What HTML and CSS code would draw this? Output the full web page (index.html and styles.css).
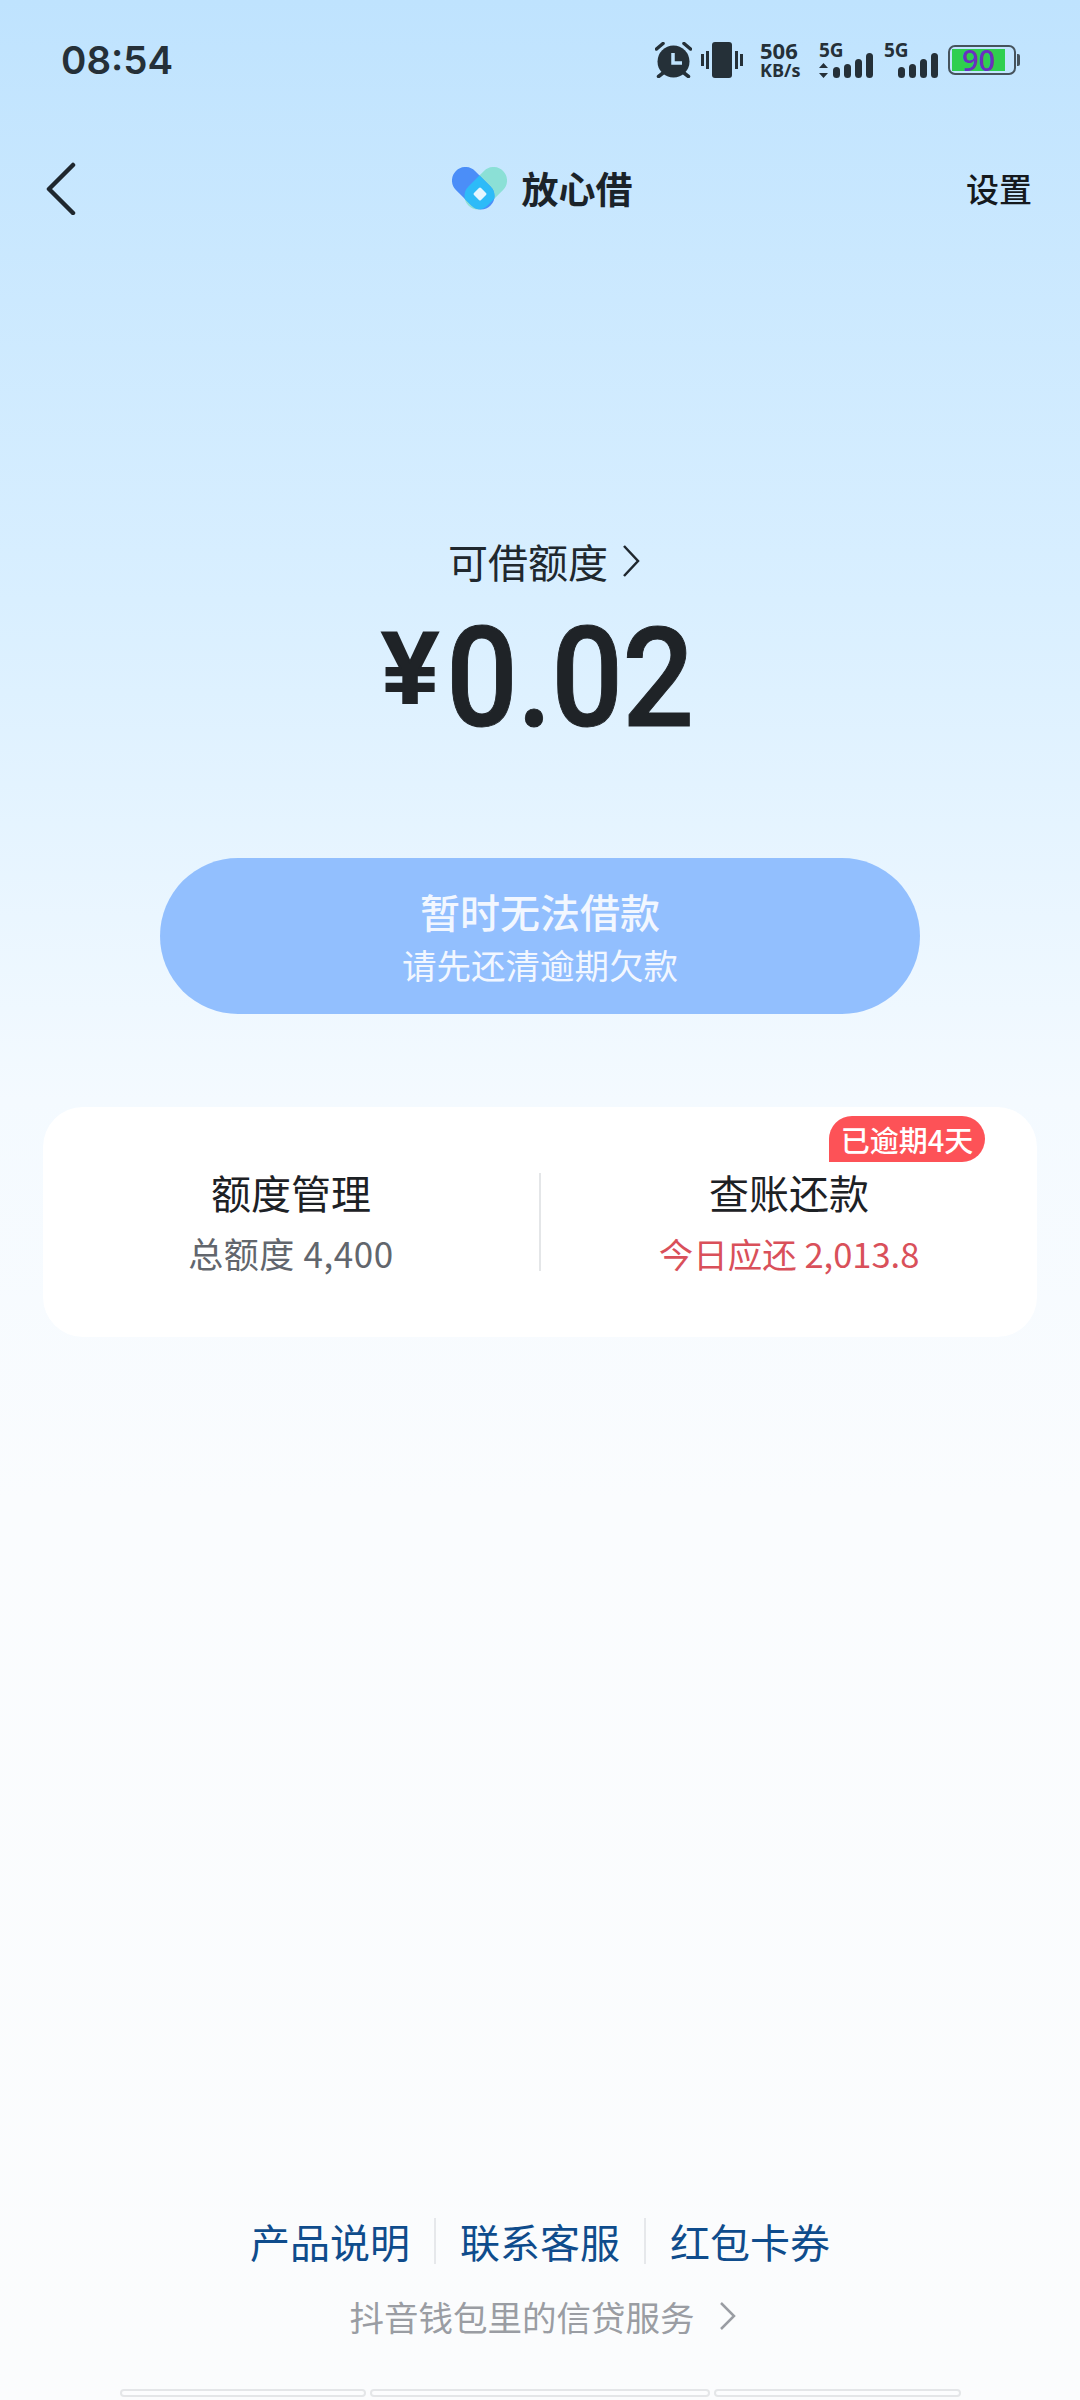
FILE: index.html
```html
<!DOCTYPE html>
<html lang="zh-CN">

	<head>
		<meta charset="UTF-8">
		<title>放心借</title>
		<link rel="stylesheet" href="styles.css">
	</head>

	<body>
		<div class="page">
			<div class="status-bar">
				<span class="time">08:54</span>
				<div class="status-icons">
					<svg class="ic-alarm" width="37" height="36" viewBox="0 0 37 36">
						<circle cx="18.500" cy="19.500" r="16" fill="#253038"/>
						<path d="M18 11v10h9" fill="none" stroke="#c0e3fd" stroke-width="3.500"/>
						<path d="M1.500 7l6.500-5.500M35.500 7L29 1.500M8 31l-4.500 3.500M29 31l4.500 3.500" fill="none" stroke="#253038" stroke-width="3.500" stroke-linecap="round"/>
					</svg>
					<svg class="ic-vibrate" width="42" height="36" viewBox="0 0 42 36">
						<rect x="11" y="0" width="20" height="36" rx="3" fill="#253038"/>
						<path d="M6.500 9v18M1.500 12v12M35.500 9v18M40.500 12v12" stroke="#253038" stroke-width="3"/>
					</svg>
					<div class="net-speed">
						<span class="speed-num">506</span>
						<span class="speed-unit">KB/s</span>
					</div>
					<div class="signal">
						<span class="signal-label">5G</span>
						<svg width="54" height="25" viewBox="0 0 54 25">
							<path d="M4.500 10l4.500 5H0zM4.500 25l4.500-5H0z" fill="#253038"/>
							<rect x="14" y="14" width="7" height="11" rx="3.500" fill="#253038"/>
							<rect x="25" y="11" width="7" height="14" rx="3.500" fill="#253038"/>
							<rect x="36" y="6" width="7" height="19" rx="3.500" fill="#253038"/>
							<rect x="47" y="0" width="7" height="25" rx="3.500" fill="#253038"/>
						</svg>
					</div>
					<div class="signal signal-second">
						<span class="signal-label">5G</span>
						<svg width="40" height="25" viewBox="0 0 40 25">
							<rect x="0" y="14" width="7" height="11" rx="3.500" fill="#253038"/>
							<rect x="11" y="11" width="7" height="14" rx="3.500" fill="#253038"/>
							<rect x="22" y="6" width="7" height="19" rx="3.500" fill="#253038"/>
							<rect x="33" y="0" width="7" height="25" rx="3.500" fill="#253038"/>
						</svg>
					</div>
					<div class="battery">
						<div class="battery-body">
							<div class="battery-fill">90</div>
						</div>
						<div class="battery-tip"></div>
					</div>
				</div>
			</div>

			<div class="nav">
				<svg class="back" width="30" height="54" viewBox="0 0 30 54">
					<path d="M27 4L3 28l24 24" fill="none" stroke="#1f272e" stroke-width="4.500" stroke-linecap="round" stroke-linejoin="round"/>
				</svg>
				<div class="brand">
					<svg width="55" height="43" viewBox="0 0 55 43">
						<defs>
							<clipPath id="blue-pill">
								<rect x="-24.500" y="-13.500" width="49" height="27" rx="13.500" transform="translate(21.250 21.250) rotate(45)"/>
							</clipPath>
						</defs>
						<rect x="-24.500" y="-13.500" width="49" height="27" rx="13.500" transform="translate(33.750 21.250) rotate(-45)" fill="#8be0d6"/>
						<rect x="-24.500" y="-13.500" width="49" height="27" rx="13.500" transform="translate(21.250 21.250) rotate(45)" fill="#4b8ef8"/>
						<g clip-path="url(#blue-pill)">
							<rect x="-24.500" y="-13.500" width="49" height="27" rx="13.500" transform="translate(33.750 21.250) rotate(-45)" fill="#2dbbf8"/>
						</g>
						<rect x="-5" y="-5" width="10" height="10" rx="1.500" transform="translate(28 27) rotate(45)" fill="#e4f6ff"/>
					</svg>
					<span class="brand-name">放心借</span>
				</div>
				<a class="nav-setting">设置</a>
			</div>

			<div class="quota">
				<div class="quota-label">
					<span>可借额度</span>
					<svg width="18" height="34" viewBox="0 0 18 34">
						<path d="M2 2l14 15L2 32" fill="none" stroke="#1f272e" stroke-width="2.500"/>
					</svg>
				</div>
				<div class="quota-amount"><span class="yen">¥</span><span class="amount-num">0.02</span></div>
			</div>

			<div class="borrow-btn">
				<div class="borrow-title">暂时无法借款</div>
				<div class="borrow-sub">请先还清逾期欠款</div>
			</div>

			<div class="card">
				<div class="card-col">
					<div class="card-title">额度管理</div>
					<div class="card-sub">总额度 4,400</div>
				</div>
				<div class="card-line"></div>
				<div class="card-col">
					<div class="card-title">查账还款</div>
					<div class="card-sub red">今日应还 2,013.8</div>
				</div>
				<div class="badge">已逾期4天</div>
			</div>

			<div class="footer">
				<div class="links">
					<a>产品说明</a>
					<a>联系客服</a>
					<a>红包卡券</a>
				</div>
				<div class="service">
					<span>抖音钱包里的信贷服务</span>
					<svg width="18" height="30" viewBox="0 0 18 30">
						<path d="M2 2l13 13L2 28" fill="none" stroke="#9a9da3" stroke-width="2.500"/>
					</svg>
				</div>
				<div class="bottom-bars">
					<div class="bar bar-a"></div>
					<div class="bar bar-b"></div>
					<div class="bar bar-c"></div>
				</div>
			</div>
		</div>
	</body>

</html>
```

FILE: styles.css
```css
html,
body {
	padding: 0;
	margin: 0;
}

body {
	font-family: "Noto Sans CJK SC", "Noto Sans", sans-serif;
	color: #1f2327;
}

.page {
	width: 1080px;
	height: 2400px;
	display: flex;
	flex-direction: column;
	overflow: hidden;
	background: linear-gradient(180deg, #bfe3fe 0, #d9efff 600px, #f4faff 1100px, #fafcfe 1500px, #fbfcfd 2400px);
}

/* status bar */
.status-bar {
	height: 120px;
	box-sizing: border-box;
	padding: 0 60px 0 61px;
	display: flex;
	justify-content: space-between;
	align-items: center;
	color: #253038;
}

.time {
	font-family: Inter, sans-serif;
	font-size: 38.500px;
	font-weight: 600;
}

.status-icons {
	display: flex;
	align-items: center;
}

.ic-vibrate {
	margin-left: 9px;
}

.net-speed {
	margin-left: 17px;
	width: 44px;
	display: flex;
	flex-direction: column;
	font-family: "Open Sans", sans-serif;
	font-weight: 700;
}

.speed-num {
	font-size: 22px;
	line-height: 20px;
}

.speed-unit {
	font-size: 18px;
	line-height: 20px;
	white-space: nowrap;
}

.signal {
	margin-left: 15px;
	width: 54px;
	height: 36px;
	position: relative;
	display: flex;
	justify-content: flex-end;
	align-items: flex-end;
}

.signal-second {
	margin-left: 11px;
}

.signal-label {
	position: absolute;
	left: 0;
	top: -2px;
	font-family: "Open Sans", sans-serif;
	font-size: 19px;
	line-height: 20px;
	font-weight: 700;
}

.battery {
	margin-left: 10px;
	display: flex;
	align-items: center;
}

.battery-body {
	width: 68px;
	height: 30px;
	box-sizing: border-box;
	border: 2px solid #46535c;
	border-radius: 7px;
	padding: 2px 9px 2px 2px;
}

.battery-fill {
	height: 100%;
	background-color: #2fcf4f;
	color: #6a2fc0;
	font-family: "Open Sans", sans-serif;
	font-size: 29px;
	font-weight: 600;
	line-height: 22px;
	text-align: center;
}

.battery-tip {
	width: 3px;
	height: 12px;
	margin-left: 1px;
	background-color: #46535c;
	border-radius: 0 2px 2px 0;
}

/* nav */
.nav {
	height: 136px;
	box-sizing: border-box;
	padding: 0 48px 0 46px;
	display: grid;
	grid-template-columns: 1fr auto 1fr;
	align-items: center;
}

.brand {
	margin-left: 6px;
	display: flex;
	align-items: center;
	gap: 15px;
}

.brand-name {
	font-size: 37px;
	font-weight: 700;
	color: #1b2329;
}

.nav-setting {
	justify-self: end;
	font-size: 33px;
	font-weight: 500;
	color: #15191d;
}

/* quota */
.quota {
	margin-top: 277px;
	display: flex;
	flex-direction: column;
	align-items: center;
}

.quota-label {
	height: 56px;
	display: flex;
	align-items: center;
	gap: 14px;
	font-size: 40px;
	color: #20282e;
	margin-left: 8px;
}

.quota-amount {
	margin-top: 20px;
	margin-right: 5px;
	height: 140px;
	line-height: 140px;
	font-family: Roboto, sans-serif;
	font-size: 139px;
	font-weight: 500;
	letter-spacing: -1px;
	white-space: nowrap;
	color: #1f2327;
}

.amount-num {
	display: inline-block;
	margin-right: -24px;
	transform: scaleX(0.91);
	transform-origin: 0 50%;
	-webkit-text-stroke: 1px #1f2327;
}

.yen {
	font-family: "Liberation Sans", sans-serif;
	font-size: 102px;
	font-weight: 700;
	line-height: 100px;
	vertical-align: 23px;
	letter-spacing: 7px;
	-webkit-text-stroke: 2px #1f2327;
}

/* button */
.borrow-btn {
	margin: 109px auto 0;
	width: 760px;
	height: 156px;
	border-radius: 78px;
	background-color: #92bffe;
	color: #f2f7ff;
	display: flex;
	flex-direction: column;
	align-items: center;
	justify-content: center;
}

.borrow-title {
	font-size: 40px;
	font-weight: 500;
	line-height: 56px;
}

.borrow-sub {
	font-size: 34.500px;
	line-height: 50px;
}

/* card */
.card {
	position: relative;
	margin: 93px 43px 0;
	height: 230px;
	border-radius: 40px;
	background-color: #fff;
	display: flex;
	align-items: flex-start;
}

.card-col {
	flex: 1;
	padding-top: 57px;
	text-align: center;
}

.card-title {
	font-size: 40px;
	line-height: 56px;
	color: #1d2125;
}

.card-sub {
	margin-top: 9px;
	font-size: 35px;
	line-height: 48px;
	letter-spacing: 0.6px;
	color: #62666d;
}

.card-sub.red {
	font-size: 34.500px;
	letter-spacing: 0;
	color: #d9505a;
}

.card-line {
	margin-top: 66px;
	width: 2px;
	height: 98px;
	background-color: #e4e6e8;
}

.badge {
	position: absolute;
	top: 9px;
	right: 52px;
	width: 156px;
	height: 46px;
	border-radius: 23px 23px 23px 0;
	background-color: #fd5257;
	color: #fff;
	font-size: 29px;
	font-weight: 500;
	line-height: 46px;
	text-align: center;
	white-space: nowrap;
}

/* footer */
.footer {
	margin-top: auto;
	display: flex;
	flex-direction: column;
	align-items: center;
}

.links {
	display: flex;
	align-items: center;
}

.links a {
	padding: 0 24px;
	font-size: 40px;
	line-height: 46px;
	color: #0f4c8c;
	border-left: 2px solid #e6e8eb;
}

.links a:first-child {
	border-left: 0;
}

.service {
	margin-top: 28px;
	margin-left: 6px;
	display: flex;
	align-items: center;
	gap: 24px;
	font-size: 34.500px;
	line-height: 48px;
	color: #9a9da3;
}

.bottom-bars {
	margin-top: 49px;
	margin-bottom: 3px;
	display: flex;
	gap: 4px;
}

.bar {
	height: 8px;
	box-sizing: border-box;
	border: 2px solid #e4e6e8;
	border-radius: 4px;
	background-color: #fcfdfe;
}

.bar-a {
	width: 246px;
}

.bar-b {
	width: 340px;
}

.bar-c {
	width: 247px;
}
```
